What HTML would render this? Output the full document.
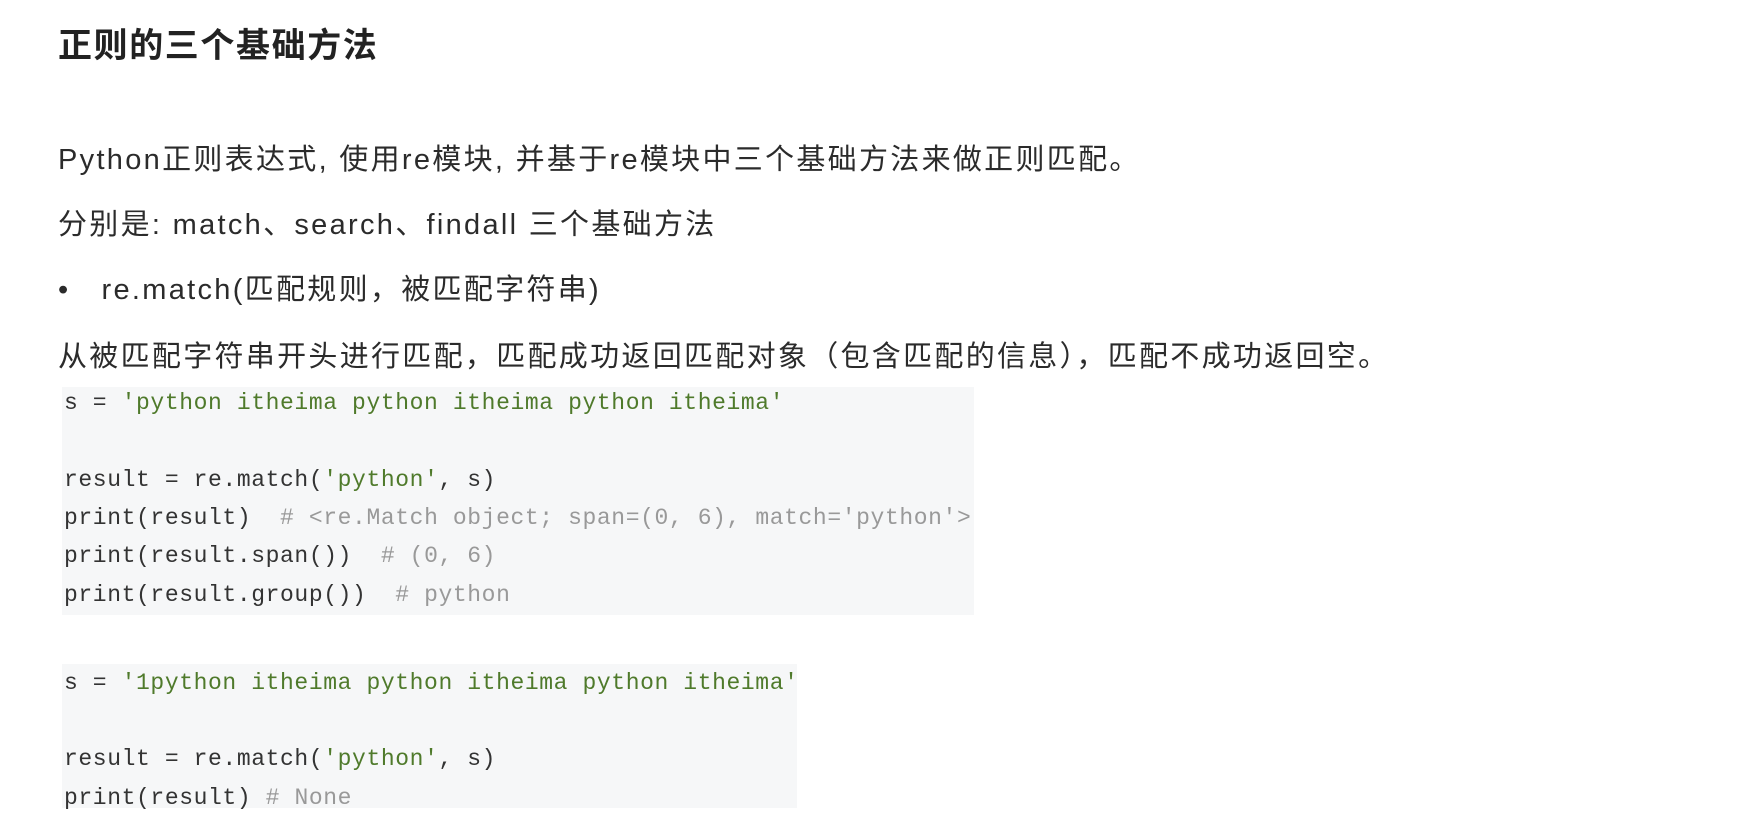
<!DOCTYPE html>
<html><head><meta charset="utf-8"><style>
body{margin:0;width:1759px;height:825px;background:#fff;overflow:hidden;font-family:"Liberation Sans","Noto Sans CJK SC",sans-serif;color:#2b2b2b;position:relative}
.a{position:absolute;left:58px;white-space:nowrap}
h1{position:absolute;left:58px;top:18px;margin:0;font-size:34px;letter-spacing:1.6px;font-weight:bold;color:#222}
.p{font-size:29px;line-height:40px;letter-spacing:2.3px}
.code{position:absolute;left:62px;background:#f6f7f8;font-family:"Liberation Mono",monospace;font-size:23px;letter-spacing:0.6px;color:#333}
.code div{position:absolute;left:2px;white-space:pre;line-height:38px}
.s{color:#4f7a2b}.c{color:#999}
</style></head><body>
<h1>正则的三个基础方法</h1>
<div class="a p" style="top:140px">Python正则表达式, 使用re模块, 并基于re模块中三个基础方法来做正则匹配。</div>
<div class="a p" style="top:205px">分别是: match、search、findall 三个基础方法</div>
<div class="a p" style="top:270px">•&nbsp;&nbsp;&nbsp;re.match(匹配规则，被匹配字符串)</div>
<div class="a p" style="top:337px">从被匹配字符串开头进行匹配，匹配成功返回匹配对象（包含匹配的信息），匹配不成功返回空。</div>
<div class="code" style="top:387px;width:912px;height:228px">
<div style="top:-3px">s = <span class="s">'python itheima python itheima python itheima'</span></div>
<div style="top:74px">result = re.match(<span class="s">'python'</span>, s)</div>
<div style="top:112px">print(result)  <span class="c"># &lt;re.Match object; span=(0, 6), match='python'&gt;</span></div>
<div style="top:150px">print(result.span())  <span class="c"># (0, 6)</span></div>
<div style="top:189px">print(result.group())  <span class="c"># python</span></div>
</div>
<div class="code" style="top:664px;width:735px;height:144px">
<div style="top:0px">s = <span class="s">'1python itheima python itheima python itheima'</span></div>
<div style="top:76px">result = re.match(<span class="s">'python'</span>, s)</div>
<div style="top:115px">print(result) <span class="c"># None</span></div>
</div>
</body></html>
